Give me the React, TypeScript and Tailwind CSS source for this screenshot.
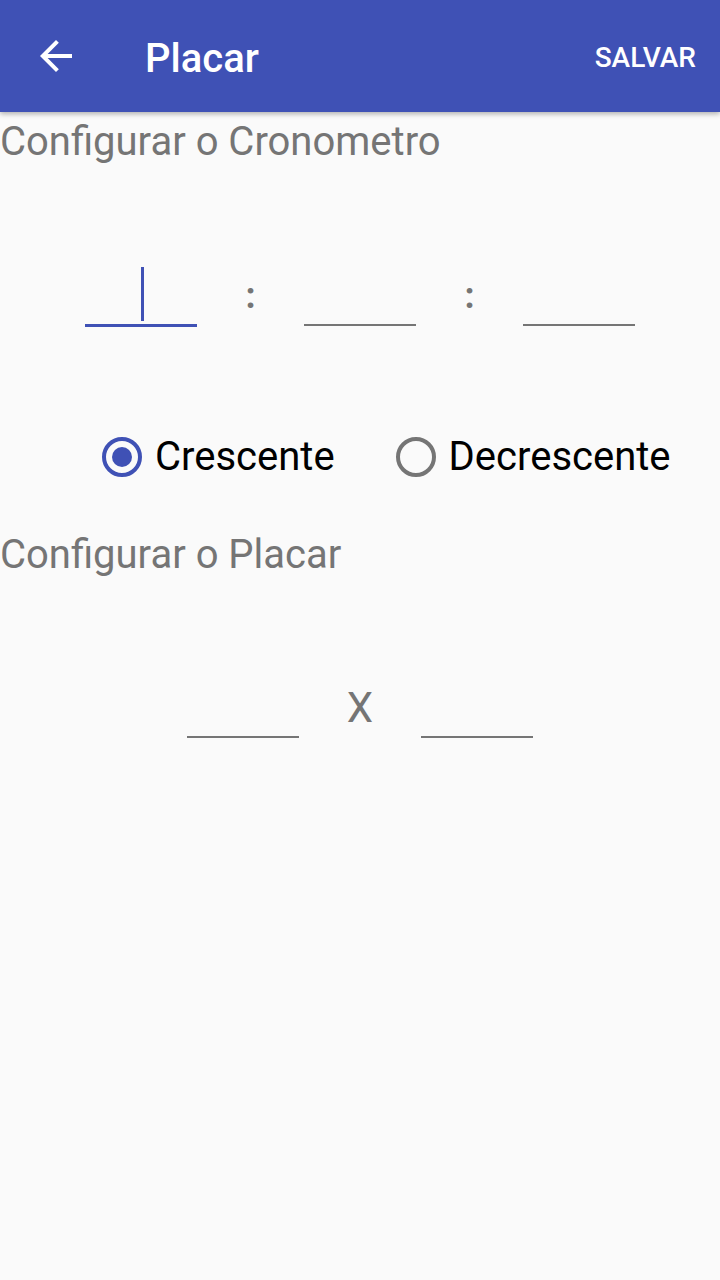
import React, { useState } from 'react';

const font = { fontFamily: 'Roboto, "Noto Sans", sans-serif' };

const Underline: React.FC<{ active?: boolean; cursor?: boolean }> = ({ active, cursor }) => (
  <div className="relative w-[112px] h-[60px] flex items-end">
    {cursor && <div className="absolute left-[56px] top-[0px] w-[3px] h-[54px] bg-[#3F51B5]" />}
    <div className={active ? 'w-full h-[3px] bg-[#3F51B5]' : 'w-full h-[2px] bg-[#757575] mb-[1px]'} />
  </div>
);

const Radio: React.FC<{ checked: boolean; label: string; onClick: () => void }> = ({ checked, label, onClick }) => (
  <button onClick={onClick} className="flex items-center gap-[13px]">
    <span
      className={`w-[40px] h-[40px] rounded-full border-[4px] flex items-center justify-center ${
        checked ? 'border-[#3F51B5]' : 'border-[#757575]'
      }`}
    >
      {checked && <span className="w-[20px] h-[20px] rounded-full bg-[#3F51B5]" />}
    </span>
    <span className="text-[40px] text-black leading-none">{label}</span>
  </button>
);

const App: React.FC = () => {
  const [modo, setModo] = useState<'cres' | 'decres'>('cres');

  return (
    <div className="min-h-screen bg-[#FAFAFA]" style={font}>
      {/* Toolbar */}
      <header className="h-[112px] bg-[#3F51B5] flex items-center text-white shadow-[0_2px_5px_rgba(0,0,0,0.3)] relative z-10">
        <button className="w-[112px] h-[112px] flex items-center justify-center">
          <svg viewBox="0 0 24 24" className="w-[48px] h-[48px]" fill="white">
            <path d="M20 11H7.83l5.59-5.59L12 4l-8 8 8 8 1.41-1.41L7.83 13H20v-2z" />
          </svg>
        </button>
        <h1 className="ml-[33px] mt-[5px] text-[40px] font-medium">Placar</h1>
        <button className="ml-auto mr-[24px] mt-[4px] text-[28px] font-medium">SALVAR</button>
      </header>

      <main>
        <h2 className="text-[40px] text-[#757575]">Configurar o Cronometro</h2>

        {/* Cronometro */}
        <div className="flex justify-center items-end mt-[95px]">
          <Underline active cursor />
          <div className="w-[107px] text-center text-[36px] font-bold text-[#757575] leading-none mb-[13px]">:</div>
          <Underline />
          <div className="w-[107px] text-center text-[36px] font-bold text-[#757575] leading-none mb-[13px]">:</div>
          <Underline />
        </div>

        {/* Modo */}
        <div className="flex items-center ml-[102px] mt-[110px] gap-[61px]">
          <Radio checked={modo === 'cres'} label="Crescente" onClick={() => setModo('cres')} />
          <Radio checked={modo === 'decres'} label="Decrescente" onClick={() => setModo('decres')} />
        </div>

        <h2 className="text-[40px] text-[#757575] mt-[48px]">Configurar o Placar</h2>

        {/* Placar */}
        <div className="flex justify-center items-end mt-[94px]">
          <Underline />
          <div className="w-[122px] text-center text-[42px] text-[#757575] leading-none mb-[10px]">X</div>
          <Underline />
        </div>
      </main>
    </div>
  );
};

export default App;
